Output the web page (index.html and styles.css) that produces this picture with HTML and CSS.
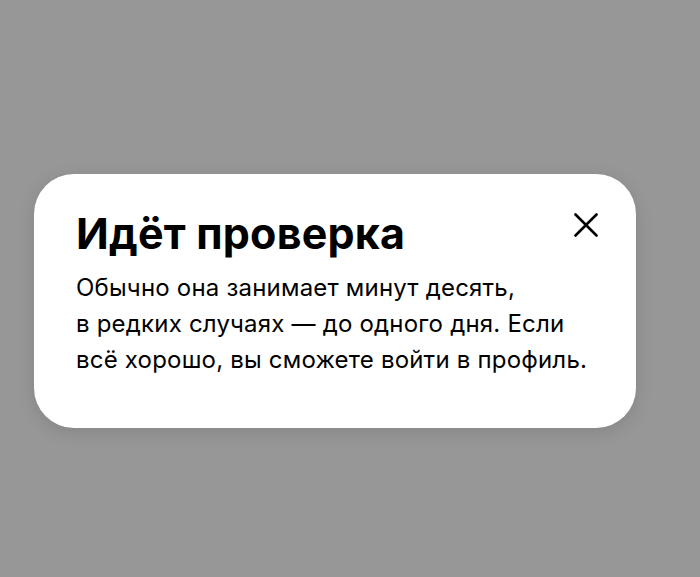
FILE: index.html
```html
<!DOCTYPE html>
<html lang="ru">
<head>
<meta charset="utf-8">
<link rel="stylesheet" href="styles.css">
</head>
<body>
<div class="screen">
  <div class="card">
    <div class="head">
      <h1 class="title">Идёт проверка</h1>
      <button class="close" aria-label="Закрыть">
        <svg width="24" height="24" viewBox="0 0 24 24"><path d="M1.5 1.5 L22.5 22.5 M22.5 1.5 L1.5 22.5" stroke="#000" stroke-width="2.6" stroke-linecap="round" fill="none"/></svg>
      </button>
    </div>
    <p class="text">Обычно она занимает минут десять,<br>в редких случаях — до одного дня. Если<br>всё хорошо, вы сможете войти в профиль.</p>
  </div>
</div>
</body>
</html>
```
FILE: styles.css
```css
html, body {
  margin: 0;
  padding: 0;
  background: #979797;
}
.screen {
  width: 700px;
  height: 577px;
  padding: 174px 64px 0 34px;
  box-sizing: border-box;
}
.card {
  width: 602px;
  height: 254px;
  box-sizing: border-box;
  background: #fff;
  border-radius: 40px;
  padding: 33px 38px 0 42px;
  box-shadow: 0 4px 18px rgba(0,0,0,0.12);
  font-family: Inter, "Noto Sans", sans-serif;
  color: #000;
}
.head {
  display: flex;
  justify-content: space-between;
  align-items: flex-start;
}
.title {
  margin: 0;
  font-size: 43px;
  font-weight: 700;
  line-height: 52px;
  letter-spacing: 0.2px;
}
.close {
  border: 0;
  background: none;
  padding: 0;
  margin-top: 6px;
  width: 24px;
  height: 24px;
}
.close svg { display: block; }
.text {
  margin: 11px 0 0;
  font-size: 24px;
  line-height: 36px;
  letter-spacing: 0.2px;
}
```
